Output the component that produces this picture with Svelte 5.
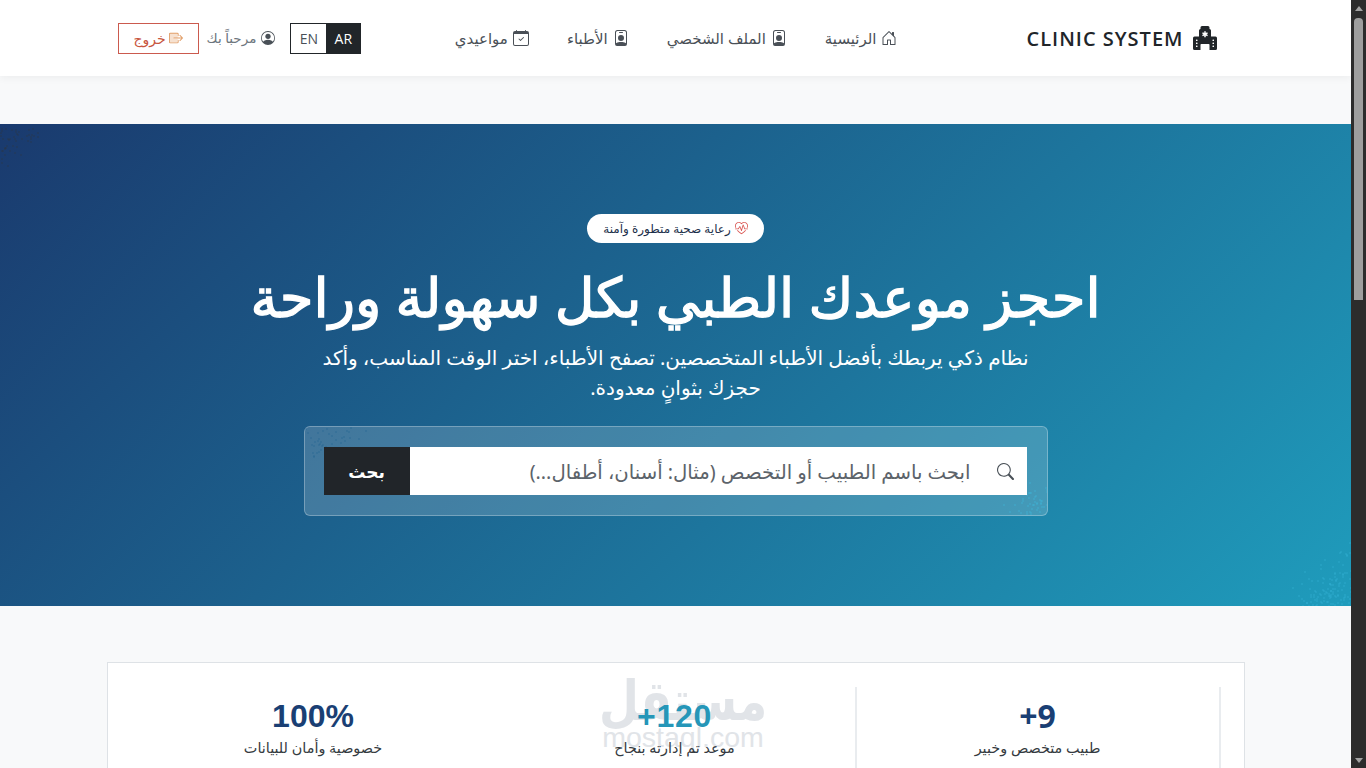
<script>
  const nav = [
    { label: 'الرئيسية', icon: 'house' },
    { label: 'الملف الشخصي', icon: 'badge' },
    { label: 'الأطباء', icon: 'badge' },
    { label: 'مواعيدي', icon: 'calendar' }
  ];
  const stats = [
    { value: '+9', label: 'طبيب متخصص وخبير', cls: 'navy bordered' },
    { value: '+120', label: 'موعد تم إدارته بنجاح', cls: 'teal' },
    { value: '100%', label: 'خصوصية وأمان للبيانات', cls: 'navy latin' }
  ];
  function dots(count, seed, w, h, corner) {
    let s = seed;
    const rnd = () => ((s = (s * 16807) % 2147483647) - 1) / 2147483646;
    const out = [];
    while (out.length < count) {
      const a = rnd(), b = rnd();
      if (a + b > 1) continue;
      const k = rnd() * 0.5 + 0.5;
      const px = corner === 'tl' ? a * w * k : w - a * w * k;
      const py = corner === 'tl' ? b * h * k : h - b * h * k;
      out.push({ x: Math.round(px) + 0.5, y: Math.round(py) + 0.5 });
    }
    return out;
  }
  const tlDots = dots(46, 77, 52, 56, 'tl');
  const brDots = dots(120, 1234, 84, 84, 'br');
  const boxTl = dots(40, 99, 84, 58, 'tl');
  const boxBr = dots(50, 4242, 66, 56, 'br');
</script>

{#snippet icon(name)}
  <svg class="bi" viewBox="0 0 16 16" fill="currentColor" aria-hidden="true">
    {#if name === 'house'}
      <path d="M8.354 1.146a.5.5 0 0 0-.708 0l-6 6A.5.5 0 0 0 1.5 7.5v7a.5.5 0 0 0 .5.5h4.5a.5.5 0 0 0 .5-.5v-4h2v4a.5.5 0 0 0 .5.5H14a.5.5 0 0 0 .5-.5v-7a.5.5 0 0 0-.146-.354L13 5.793V2.5a.5.5 0 0 0-.5-.5h-1a.5.5 0 0 0-.5.5v1.293zM2.5 14V7.707l5.5-5.5 5.5 5.5V14H10v-4a.5.5 0 0 0-.5-.5h-3a.5.5 0 0 0-.5.5v4z" />
    {:else if name === 'badge'}
      <path d="M6.5 2a.5.5 0 0 0 0 1h3a.5.5 0 0 0 0-1zM11 8a3 3 0 1 1-6 0 3 3 0 0 1 6 0" />
      <path d="M4.5 0A2.5 2.5 0 0 0 2 2.5V14a2 2 0 0 0 2 2h8a2 2 0 0 0 2-2V2.5A2.5 2.5 0 0 0 11.5 0zM3 2.5A1.5 1.5 0 0 1 4.5 1h7A1.5 1.5 0 0 1 13 2.5v10.795a4.2 4.2 0 0 0-.776-.492C11.392 12.387 10.063 12 8 12s-3.392.387-4.224.803a4.2 4.2 0 0 0-.776.492z" />
    {:else if name === 'calendar'}
      <path d="M10.854 7.146a.5.5 0 0 1 0 .708l-3 3a.5.5 0 0 1-.708 0l-1.5-1.5a.5.5 0 1 1 .708-.708L7.5 9.793l2.646-2.647a.5.5 0 0 1 .708 0" />
      <path d="M3.5 0a.5.5 0 0 1 .5.5V1h8V.5a.5.5 0 0 1 1 0V1h1a2 2 0 0 1 2 2v11a2 2 0 0 1-2 2H2a2 2 0 0 1-2-2V3a2 2 0 0 1 2-2h1V.5a.5.5 0 0 1 .5-.5M1 4v10a1 1 0 0 0 1 1h12a1 1 0 0 0 1-1V4z" />
    {:else if name === 'person'}
      <path d="M11 6a3 3 0 1 1-6 0 3 3 0 0 1 6 0" />
      <path fill-rule="evenodd" d="M0 8a8 8 0 1 1 16 0A8 8 0 0 1 0 8m8-7a7 7 0 0 0-5.468 11.37C3.242 11.226 4.805 10 8 10s4.757 1.225 5.468 2.37A7 7 0 0 0 8 1" />
    {:else if name === 'exit'}
      <path d="M1.5 3h8l.5.5V8H5.5v1H10v3.5l-.5.5h-8l-.5-.5v-9z" opacity=".3" />
      <path fill-rule="evenodd" d="M10 12.5a.5.5 0 0 1-.5.5h-8a.5.5 0 0 1-.5-.5v-9a.5.5 0 0 1 .5-.5h8a.5.5 0 0 1 .5.5v2a.5.5 0 0 0 1 0v-2A1.5 1.5 0 0 0 9.5 2h-8A1.5 1.5 0 0 0 0 3.5v9A1.5 1.5 0 0 0 1.5 14h8a1.5 1.5 0 0 0 1.5-1.5v-2a.5.5 0 0 0-1 0z" />
      <path fill-rule="evenodd" d="M15.854 8.354a.5.5 0 0 0 0-.708l-3-3a.5.5 0 0 0-.708.708L14.293 7.5H5.5a.5.5 0 0 0 0 1h8.793l-2.147 2.146a.5.5 0 0 0 .708.708z" />
    {:else if name === 'search'}
      <path d="M11.742 10.344a6.5 6.5 0 1 0-1.397 1.398h-.001q.044.06.098.115l3.85 3.85a1 1 0 0 0 1.415-1.414l-3.85-3.85a1 1 0 0 0-.115-.1zM12 6.5a5.5 5.5 0 1 1-11 0 5.5 5.5 0 0 1 11 0" />
    {:else if name === 'hospital'}
      <path fill-rule="evenodd" d="M6 0a1 1 0 0 0-1 1v1a1 1 0 0 0-1 1v4H1a1 1 0 0 0-1 1v7a1 1 0 0 0 1 1h4v-3.5a.5.5 0 0 1 .5-.5h5a.5.5 0 0 1 .5.5V16h4a1 1 0 0 0 1-1V8a1 1 0 0 0-1-1h-3V3a1 1 0 0 0-1-1V1a1 1 0 0 0-1-1zm2.5 3.534v1.1l.953-.55.5.866L9 5.5l.953.55-.5.866-.953-.55v1.1h-1v-1.1l-.953.55-.5-.866L7 5.5l-.953-.55.5-.866.953.55v-1.1zM2.25 9h.5a.25.25 0 0 1 .25.25v.5a.25.25 0 0 1-.25.25h-.5A.25.25 0 0 1 2 9.75v-.5A.25.25 0 0 1 2.25 9m0 2h.5a.25.25 0 0 1 .25.25v.5a.25.25 0 0 1-.25.25h-.5a.25.25 0 0 1-.25-.25v-.5a.25.25 0 0 1 .25-.25m0 2h.5a.25.25 0 0 1 .25.25v.5a.25.25 0 0 1-.25.25h-.5a.25.25 0 0 1-.25-.25v-.5a.25.25 0 0 1 .25-.25m11-4h.5a.25.25 0 0 1 .25.25v.5a.25.25 0 0 1-.25.25h-.5a.25.25 0 0 1-.25-.25v-.5a.25.25 0 0 1 .25-.25m0 2h.5a.25.25 0 0 1 .25.25v.5a.25.25 0 0 1-.25.25h-.5a.25.25 0 0 1-.25-.25v-.5a.25.25 0 0 1 .25-.25m0 2h.5a.25.25 0 0 1 .25.25v.5a.25.25 0 0 1-.25.25h-.5a.25.25 0 0 1-.25-.25v-.5a.25.25 0 0 1 .25-.25" />
    {:else if name === 'heart'}
      <path d="m8 2.748-.717-.737C5.6.281 2.514.878 1.4 3.053.918 3.995.78 5.323 1.508 7H.43c-2.128-5.697 4.165-8.83 7.394-5.857q.09.083.176.171a3 3 0 0 1 .176-.17c3.23-2.974 9.522.159 7.394 5.856h-1.078c.728-1.677.59-3.005.108-3.947C13.486.878 10.4.28 8.717 2.01z" />
      <path d="M2.212 10h1.315C4.593 11.183 6.05 12.458 8 13.795c1.949-1.337 3.407-2.612 4.473-3.795h1.315c-1.265 1.566-3.14 3.25-5.788 5-2.648-1.75-4.523-3.434-5.788-5" />
      <path d="M10.464 3.314a.5.5 0 0 0-.945.049L7.921 8.956 6.464 5.314a.5.5 0 0 0-.88-.091L3.732 8H.5a.5.5 0 0 0 0 1H4a.5.5 0 0 0 .416-.223l1.473-2.209 1.647 4.118a.5.5 0 0 0 .945-.049l1.598-5.593 1.457 3.642A.5.5 0 0 0 12 9h3.5a.5.5 0 0 0 0-1h-3.162z" />
    {/if}
  </svg>
{/snippet}

<div class="shell">
  <div class="page" dir="rtl">
    <header class="navbar">
      <div class="container nav-inner">
        <a class="brand" href="#top"><span class="brand-icon">{@render icon('hospital')}</span><span>CLINIC SYSTEM</span></a>
        <nav class="links">
          {#each nav as item}
            <a href="#top">{@render icon(item.icon)}<span>{item.label}</span></a>
          {/each}
        </nav>
        <div class="controls">
          <div class="lang"><span class="on">AR</span><span>EN</span></div>
          <span class="welcome">{@render icon('person')}<span>مرحباً بك</span></span>
          <button class="logout"><span class="exit-icon">{@render icon('exit')}</span><span>خروج</span></button>
        </div>
      </div>
    </header>

    <section class="hero">
      <svg class="sprinkle tl" width="52" height="56" aria-hidden="true">
        {#each tlDots as d}<rect x={d.x} y={d.y} width="1" height="1" fill="#30343a" />{/each}
      </svg>
      <svg class="sprinkle br" width="84" height="84" aria-hidden="true">
        {#each brDots as d}<rect x={d.x} y={d.y} width="1" height="1" fill="#38b6dc" />{/each}
      </svg>
      <div class="badge">{@render icon('heart')}<span>رعاية صحية متطورة وآمنة</span></div>
      <h1>احجز موعدك الطبي بكل سهولة وراحة</h1>
      <p>نظام ذكي يربطك بأفضل الأطباء المتخصصين. تصفح الأطباء، اختر الوقت المناسب، وأكد حجزك بثوانٍ معدودة.</p>
      <div class="search-box">
        <svg class="sprinkle box-tl" width="84" height="58" aria-hidden="true">
          {#each boxTl as d}<rect x={d.x} y={d.y} width="1" height="1" fill="#1d5f8e" />{/each}
        </svg>
        <svg class="sprinkle box-br" width="66" height="56" aria-hidden="true">
          {#each boxBr as d}<rect x={d.x} y={d.y} width="1" height="1" fill="#3cc0e4" />{/each}
        </svg>
        <div class="search">
          <span class="search-icon">{@render icon('search')}</span>
          <input placeholder="ابحث باسم الطبيب أو التخصص (مثال: أسنان، أطفال...)" />
          <button>بحث</button>
        </div>
      </div>
    </section>

    <section class="stats-wrap">
      <div class="stats">
        {#each stats as s}
          <div class="stat {s.cls}">
            <strong dir="ltr">{s.value}</strong>
            <span>{s.label}</span>
          </div>
        {/each}
      </div>
      <div class="watermark" aria-hidden="true">
        <span class="wm-ar">مستقل</span>
        <span class="wm-en">mostaql.com</span>
      </div>
    </section>
  </div>
  <div class="scrollbar" aria-hidden="true">
    <i class="arrow up"></i>
    <i class="thumb"></i>
    <i class="arrow down"></i>
  </div>
</div>

<style>
  :global(body) { margin: 0; overflow: hidden; background: #f8f9fa; }
  .shell { display: flex; height: 768px; overflow: hidden; font-family: "Noto Sans", "DejaVu Sans", sans-serif; color: #212529; }
  .page { width: 1351px; flex: none; height: 768px; overflow: hidden; position: relative; background: #f8f9fa; }
  a { color: inherit; text-decoration: none; }
  .bi { width: 1em; height: 1em; flex: none; display: block; }

  .navbar { height: 76px; background: #fff; box-shadow: 0 2px 8px rgba(0, 0, 0, .05); position: relative; z-index: 2; }
  .container { width: 1116px; margin: 0 auto; }
  .nav-inner { height: 76px; display: flex; align-items: center; padding-inline-start: 17px; box-sizing: border-box; }
  .brand { display: flex; align-items: center; gap: 9px; font-size: 20px; font-weight: 600; letter-spacing: 1px; color: #212529; font-family: "Open Sans", sans-serif; }
  .brand-icon { font-size: 24px; display: block; height: 24px; }
  .links { display: flex; align-items: center; gap: 38px; margin-inline-start: 129px; font-size: 15px; color: #4a5057; }
  .links a { display: flex; align-items: center; gap: 5px; }
  .links .bi { font-size: 16px; }
  .controls { display: flex; align-items: center; margin-inline-start: auto; }
  .lang { display: flex; border: 1px solid #212529; font-size: 14px; height: 29px; font-family: "Open Sans", sans-serif; }
  .lang span { width: 35px; display: grid; place-items: center; color: #495057; }
  .lang .on { width: 34px; background: #212529; color: #fff; }
  .welcome { display: flex; align-items: center; gap: 5px; font-size: 13.5px; color: #6c757d; margin-inline-start: 15px; }
  .welcome .bi { font-size: 14px; color: #495057; }
  .logout { display: flex; align-items: center; justify-content: center; gap: 3px; width: 81px; height: 31px; margin-inline-start: 8px; padding: 0; background: #fff; border: 1px solid #cb5a4e; color: #c8553d; font: inherit; font-size: 14px; }
  .exit-icon { font-size: 14px; color: #e09a62; display: block; height: 14px; }

  .hero { position: relative; margin-top: 48px; height: 482px; background: linear-gradient(135deg, #1a3a6e 0%, #1f9cbc 100%); display: flex; flex-direction: column; align-items: center; color: #fff; }
  .sprinkle { position: absolute; display: block; pointer-events: none; }
  .sprinkle.tl { top: 4px; left: 0; }
  .sprinkle.br { bottom: 0; right: 0; }
  .badge { margin-top: 90px; height: 29px; width: 177px; border-radius: 15px; background: #fff; color: #1c2f4a; display: flex; align-items: center; justify-content: center; gap: 4px; font-size: 12px; }
  .badge .bi { font-size: 13px; color: #d9534f; }
  h1 { margin: 21px 0 0; font-size: 54.6px; line-height: 64px; font-weight: 400; -webkit-text-stroke: 1.3px #fff; white-space: nowrap; }
  p { margin: 15px 0 0; width: 720px; text-align: center; font-size: 20px; line-height: 30px; }
  .search-box { position: relative; margin-top: 23px; width: 744px; height: 90px; box-sizing: border-box; padding: 20px 20px 20px 19px; background: rgba(255, 255, 255, .17); border: 1px solid rgba(255, 255, 255, .28); border-radius: 6px; }
  .sprinkle.box-tl { top: 0; left: 0; }
  .sprinkle.box-br { bottom: 0; right: 0; }
  .search { position: relative; display: flex; height: 48px; background: #fff; }
  .search-icon { width: 56px; flex: none; display: flex; align-items: center; padding-inline-start: 13px; box-sizing: border-box; font-size: 17px; color: #495057; }
  .search input { flex: 1; min-width: 0; border: 0; outline: 0; background: none; font: inherit; font-size: 19.7px; color: #212529; padding: 0; }
  .search input::placeholder { color: #5c636a; opacity: 1; }
  .search button { width: 86px; flex: none; border: 0; background: #212529; color: #fff; font: inherit; font-size: 17px; font-weight: 700; }

  .stats-wrap { position: relative; padding-top: 56px; }
  .stats { width: 1138px; height: 140px; margin: 0 auto; box-sizing: border-box; background: #fff; border: 1px solid #dee2e6; border-bottom: 0; padding: 24px 23px 0 24px; display: grid; grid-template-columns: 366px 360px 1fr; }
  .stat { display: flex; flex-direction: column; align-items: center; height: 120px; box-sizing: border-box; padding-top: 8px; position: relative; z-index: 1; }
  .bordered { border-inline: 2px solid #e9ecef; }
  .stat strong { font-size: 32px; line-height: 42px; font-weight: 700; }
  .stat span { font-size: 14.4px; line-height: 22px; color: #343a40; }
  .navy strong { color: #1a3f74; }
  .teal strong { color: #2596b8; font-family: "Liberation Sans", sans-serif; letter-spacing: .7px; }
  .latin strong { font-family: "Liberation Sans", sans-serif; }
  .watermark { position: absolute; top: 72px; left: 599px; width: 168px; height: 78px; display: flex; flex-direction: column; align-items: center; color: #e1e4e8; pointer-events: none; }
  .wm-ar { font-size: 46px; line-height: 50px; height: 50px; font-weight: 700; transform: scaleY(1.2); transform-origin: center bottom; }
  .wm-en { font-family: "Liberation Sans", sans-serif; font-size: 28.5px; line-height: 26px; margin-top: -4px; }

  .scrollbar { width: 15px; flex: none; height: 768px; background: #2c2c2c; display: flex; flex-direction: column; align-items: center; }
  .arrow { width: 0; height: 0; border-inline: 4.5px solid transparent; flex: none; }
  .arrow.up { border-bottom: 5px solid #a3a3a3; margin-top: 6px; }
  .arrow.down { border-top: 5px solid #a3a3a3; margin: auto 0 5px; }
  .thumb { display: block; width: 9px; height: 282px; margin-top: 7px; background: #9e9e9e; border-radius: 4px 4px 0 0; }
</style>
